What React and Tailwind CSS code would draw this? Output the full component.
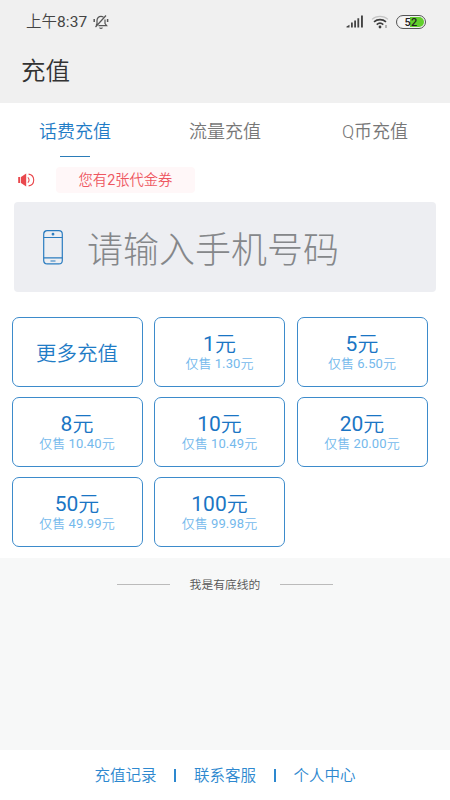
import React from 'react';

const tabs = ['话费充值', '流量充值', 'Q币充值'];

const plans = [
    { value: '1', price: '1.30' },
    { value: '5', price: '6.50' },
    { value: '8', price: '10.40' },
    { value: '10', price: '10.49' },
    { value: '20', price: '20.00' },
    { value: '50', price: '49.99' },
    { value: '100', price: '99.98' },
];

const links = ['充值记录', '联系客服', '个人中心'];

const BellOff = () => (
    <svg className="w-4 h-4" viewBox="0 0 16 16" fill="none" stroke="#555" strokeWidth="1.2">
        <path d="M3.200 11.500 4 9.500V6.500C4 4 5.800 2.300 8 2.300c.9 0 1.700.3 2.400.8M12 5.500v4l1.700 2.200H5.500M6.500 13.700c.8.800 2.200.800 3 0M13 1.500 2.500 13" />
        <path d="M1.200 5v3M14.600 5v3" strokeWidth="1.500" />
    </svg>
);

const Signal = () => (
    <svg className="w-[18px] h-[13px]" viewBox="0 0 18 13" fill="#444">
        <path d="M.5 12.500v-1l3-1.800v2.800zM5 12.500V7.500h1.800v5zM8.200 12.500V5.500H10v7zM11.400 12.500V3.300h1.800v9.200zM15 12.500V.5h1.900v12z" />
    </svg>
);

const Wifi = () => (
    <svg className="w-[18px] h-[14px]" viewBox="0 0 18 14" fill="none" strokeWidth="1.6">
        <path d="M1 4.400C5.400.4 12.600.4 17 4.400" stroke="#c4c4c4" strokeWidth="1.200" />
        <path d="M3 6.900c3.400-3 8.600-3 12 0M5.700 9.600c1.900-1.700 4.700-1.700 6.600 0" stroke="#3c3c3c" />
        <circle cx="9" cy="12" r="1.400" fill="#3c3c3c" />
        <path d="M15 10v3" stroke="#777" strokeWidth="1" />
    </svg>
);

const Battery = () => (
    <div className="w-[30px] h-[14px] rounded-full border-[1.500px] border-[#555] p-px">
        <div className="h-full rounded-full bg-[linear-gradient(90deg,#f5f5f5_48%,#62d02c_48%)] flex items-center justify-center">
            <span className="pt-px font-[Roboto] text-[11px] font-medium leading-none tracking-[0.2px] text-[#222]">52</span>
        </div>
    </div>
);

const Speaker = () => (
    <svg className="w-[17px] h-[14px]" viewBox="0 0 17 14" fill="none" stroke="#e9484d" strokeWidth="1.100">
        <path d="M.2 4h2v6h-2zM3 4 8.200.5v13L3 10z" fill="#e9484d" stroke="none" />
        <path d="M9.800 4.300c1.700 1.400 1.700 4 0 5.400M10.600 1.100c6.800 1 6.800 10.800 0 11.800" />
    </svg>
);

const Phone = () => (
    <svg className="w-5 h-[35px]" viewBox="0 0 20 35" fill="none" stroke="#2b7cc0" strokeWidth="1.200">
        <rect x=".7" y=".7" width="18.600" height="33.200" rx="3.500" />
        <path d="M.7 7.500h18.600M.7 27.800h18.600M7.500 31h5" />
        <circle cx="10" cy="4.200" r=".8" fill="#2b7cc0" />
    </svg>
);

const App = () => {
    return (
        <div className="h-screen flex flex-col bg-[#f7f8f8] font-[Roboto,'Noto_Sans_CJK_SC',sans-serif] font-[350] overflow-hidden">
            <header className="h-[103px] shrink-0 bg-[#f0f0f0]">
                <div className="h-[43px] flex items-center justify-between pl-[26px] pr-[24px]">
                    <div className="flex items-center gap-[6px]">
                        <span className="pt-[2px] text-[15.5px] text-[#444]">上午<span className="font-normal tracking-[0.1px]">8:37</span></span>
                        <BellOff />
                    </div>
                    <div className="flex items-center gap-[7px]">
                        <Signal />
                        <Wifi />
                        <Battery />
                    </div>
                </div>
                <h1 className="pl-[21px] pt-[11px] text-[24.500px] leading-[36px] text-[#333]">充值</h1>
            </header>

            <main className="h-[455px] shrink-0 bg-white">
                <nav className="h-[54px] flex">
                    {tabs.map((tab, i) => (
                        <div key={tab} className="flex-1 flex flex-col items-center justify-between">
                            <span className={`pt-[15px] text-[18px] leading-[27px] ${i === 0 ? 'text-[#1f7cc6]' : 'text-[#777]'}`}>{tab}</span>
                            {i === 0 && <span className="w-[30px] h-[1.500px] bg-[#2b7cb8]" />}
                        </div>
                    ))}
                </nav>

                <div className="flex items-center pl-[18px] pt-[10px]">
                    <Speaker />
                    <div className="ml-[21px] w-[139px] h-[26px] rounded bg-[#fff7f8] flex items-center justify-center pt-[2px] text-[14.300px] text-[#ee5660]">您有<span className="font-normal">2</span>张代金券</div>
                </div>

                <div className="mx-[14px] mt-[9px] h-[90px] rounded bg-[#edeef2] flex items-center pl-[29px]">
                    <Phone />
                    <span className="ml-[24px] pt-[7px] text-[36px] leading-[54px] font-light text-[#85878a]">请输入手机号码</span>
                </div>

                <div className="grid grid-cols-3 gap-x-[11.500px] gap-y-[10px] pl-[11.500px] pr-[22.500px] mt-[25px]">
                    <button className="h-[70px] rounded-[7px] border border-[#3d8bcb] pt-[5px] text-[20.500px] text-[#1f7cc6]">更多充值</button>
                    {plans.map((plan) => (
                        <button key={plan.value} className="h-[70px] rounded-[7px] border border-[#3d8bcb] flex flex-col items-center justify-center">
                            <span className="text-[21px] leading-[24px] text-[#1a75c4]"><span className="font-normal">{plan.value}</span>元</span>
                            <span className="text-[13px] leading-[16px] text-[#74b9ec]">仅售 <span className="font-normal tracking-[0.1px]">{plan.price}</span>元</span>
                        </button>
                    ))}
                </div>
            </main>

            <div className="flex-1 pt-[18px]">
                <div className="flex items-center justify-center gap-5">
                    <span className="w-[53px] h-px -mt-0.5 bg-[#bbb]" />
                    <span className="text-[11.800px] leading-[18px] text-[#555]">我是有底线的</span>
                    <span className="w-[53px] h-px -mt-0.5 bg-[#bbb]" />
                </div>
            </div>

            <footer className="h-[50px] shrink-0 bg-white flex items-center justify-center text-[15.500px] text-[#2d88cf]">
                {links.map((link, i) => (
                    <React.Fragment key={link}>
                        {i > 0 && <span className="mx-[18px] w-[1.500px] h-[13px] bg-[#2d88cf]" />}
                        <a href="#" className="pt-[3px]">{link}</a>
                    </React.Fragment>
                ))}
            </footer>
        </div>
    );
};

export default App;
